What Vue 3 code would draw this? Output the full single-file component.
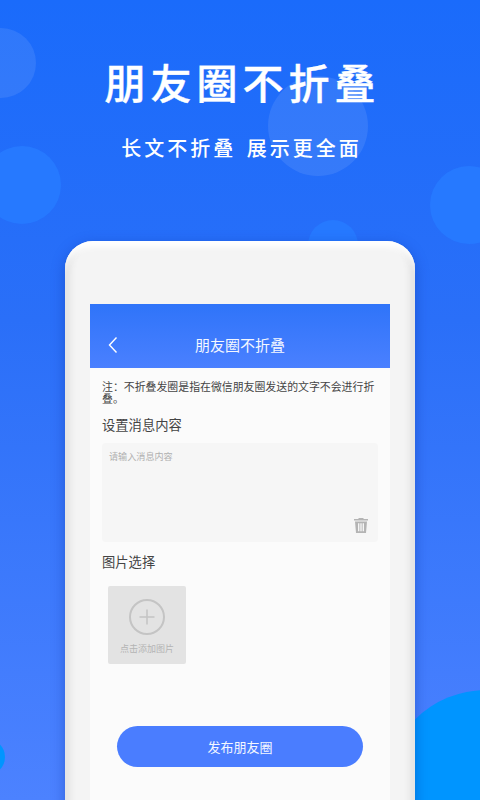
<script setup>
const bubbles = [
  { cx: 0.5, cy: 63, r: 35, c: 'rgba(255,255,255,.09)' },
  { cx: 22, cy: 185, r: 39, c: '#2679ff' },
  { cx: 318, cy: 126, r: 50, c: 'rgba(255,255,255,.09)' },
  { cx: 469, cy: 205, r: 39, c: '#2679ff' },
  { cx: 333, cy: 245, r: 25, c: '#2679ff' },
  { cx: 486, cy: 790, r: 100, c: '#0095ff' },
  { cx: -13, cy: 757, r: 18, c: '#0095ff' }
]
const bubbleStyle = (b) => ({
  left: b.cx - b.r + 'px',
  top: b.cy - b.r + 'px',
  width: b.r * 2 + 'px',
  height: b.r * 2 + 'px',
  background: b.c
})
</script>

<template>
  <div class="page">
    <span v-for="(b, i) in bubbles" :key="i" class="bubble" :style="bubbleStyle(b)"></span>
    <h1 class="title">朋友圈不折叠</h1>
    <p class="sub">长文不折叠 展示更全面</p>
    <div class="phone">
      <div class="screen">
        <div class="bar">
          <svg class="back" viewBox="0 0 12 18" width="12" height="18">
            <path d="M9.5 1.5 2.5 9l7 7.5" fill="none" stroke="#fff" stroke-width="1.4" />
          </svg>
          <span class="bar-title">朋友圈不折叠</span>
        </div>
        <div class="body">
          <p class="note">注：不折叠发圈是指在微信朋友圈发送的文字不会进行折叠。</p>
          <div class="label first">设置消息内容</div>
          <div class="input">
            <span class="placeholder">请输入消息内容</span>
            <svg class="trash" viewBox="0 0 16 16" width="16" height="16">
              <path d="M5.5 2V1h5v1H15v1.6H1V2z" fill="#b4b4b4" />
              <path fill-rule="evenodd" d="M2 4.4h12L13 16H3zM5 6.2v8h1.4v-8zM7.3 6.2v8h1.4v-8zM9.6 6.2v8H11v-8z" fill="#b4b4b4" />
            </svg>
          </div>
          <div class="label second">图片选择</div>
          <div class="picker">
            <svg viewBox="0 0 36 36" width="36" height="36">
              <circle cx="18" cy="18" r="17" fill="none" stroke="#c4c4c4" stroke-width="2" />
              <path d="M18 10.5v15M10.5 18h15" fill="none" stroke="#c4c4c4" stroke-width="1.5" />
            </svg>
            <span class="picker-text">点击添加图片</span>
          </div>
          <button class="publish" type="button">发布朋友圈</button>
        </div>
      </div>
    </div>
  </div>
</template>

<style>
html, body { margin: 0; padding: 0; }
</style>

<style scoped>
.page {
  position: relative;
  width: 480px;
  height: 800px;
  overflow: hidden;
  display: flex;
  flex-direction: column;
  align-items: center;
  background: linear-gradient(180deg, #1a6bfb 0%, #2a6ff8 40%, #4c82ff 100%);
  font-family: "Noto Sans CJK SC", "Noto Sans", sans-serif;
}
.bubble { position: absolute; border-radius: 50%; }
.title {
  position: relative;
  margin: 52px 0 0;
  padding-left: 5px;
  font-size: 41px;
  line-height: 58px;
  font-weight: 500;
  -webkit-text-stroke: 0.4px #fff;
  letter-spacing: 5px;
  color: #fff;
}
.sub {
  position: relative;
  margin: 23px 0 0;
  padding-left: 3px;
  font-size: 20px;
  line-height: 30px;
  font-weight: 500;
  letter-spacing: 3px;
  color: #fff;
  word-spacing: 3px;
}
.phone {
  position: relative;
  margin-top: 78px;
  width: 350px;
  height: 580px;
  flex: none;
  box-sizing: border-box;
  padding: 63px 25px 0;
  border-radius: 28px 28px 0 0;
  background: #f4f4f4;
  box-shadow: 0 4px 14px rgba(0, 40, 150, .35),
    inset 0 8px 6px -2px #fff,
    inset 9px 0 8px -6px #d6d6d6,
    inset -9px 0 8px -6px #d6d6d6;
}
.screen { height: 100%; background: #fbfbfb; }
.bar {
  position: relative;
  height: 64px;
  box-sizing: border-box;
  padding-top: 30px;
  text-align: center;
  background: linear-gradient(180deg, #2f74f9, #4a80ff);
}
.back { position: absolute; left: 17px; top: 32px; }
.bar-title { font-size: 15px; line-height: 22px; color: #f4f7ff; display: block; }
.body { display: flex; flex-direction: column; padding: 12px 12px 0; }
.note { margin: 0; font-size: 10.9px; line-height: 12px; color: #444; }
.label { font-size: 13.3px; line-height: 20px; color: #444; }
.label.first { margin-top: 11px; }
.label.second { margin-top: 10px; }
.input {
  position: relative;
  margin-top: 8px;
  height: 99px;
  width: 276px;
  box-sizing: border-box;
  padding: 6px 7px;
  background: #f6f6f6;
  border-radius: 4px;
}
.placeholder { display: block; font-size: 9.1px; line-height: 14px; color: #b0b0b0; }
.trash { position: absolute; right: 9px; bottom: 9px; }
.picker {
  margin: 14px 0 0 6px;
  width: 78px;
  height: 78px;
  display: flex;
  flex-direction: column;
  align-items: center;
  padding-top: 13px;
  box-sizing: border-box;
  background: #e3e3e3;
  border-radius: 2px;
}
.picker-text { margin-top: 7px; font-size: 9px; line-height: 14px; color: #b4b4b4; }
.publish {
  align-self: center;
  margin: 62px 0 0;
  width: 246px;
  height: 41px;
  border: 0;
  border-radius: 21px;
  background: #4a7dff;
  color: #f4f7ff;
  font-family: inherit;
  font-size: 13px;
}
</style>
